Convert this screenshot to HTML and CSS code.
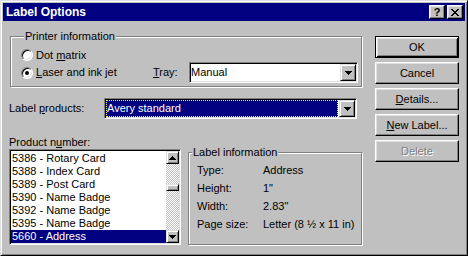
FILE: index.html
```html
<!DOCTYPE html>
<html lang="en">
<head>
  <meta charset="UTF-8">
  <title>Label Options</title>
  <link rel="stylesheet" href="styles.css">
</head>
<body>

  <div class="window">
    <div class="titlebar">
      <span class="title">Label Options</span>
      <div class="title-btns">
        <span class="tbtn help">?</span>
        <span class="tbtn close">
          <svg width="8" height="7" shape-rendering="crispEdges"><path d="M0 0h2v1h-2zM6 0h2v1h-2zM1 1h2v1h-2zM5 1h2v1h-2zM2 2h4v1h-4zM3 3h2v1h-2zM2 4h4v1h-4zM1 5h2v1h-2zM5 5h2v1h-2zM0 6h2v1h-2zM6 6h2v1h-2z"/></svg>
        </span>
      </div>
    </div>

    <div class="content">
      <div class="main">

        <div class="group printer">
          <div class="legend">Printer information</div>
          <div class="opt-row first">
            <span class="radio"></span><span>Dot <u>m</u>atrix</span>
          </div>
          <div class="opt-row second">
            <div class="radio-item"><span class="radio checked"></span><span><u>L</u>aser and ink jet</span></div>
            <span class="tray-label"><u>T</u>ray:</span>
            <div class="combo tray">
              <span class="combo-text">Manual</span>
              <span class="drop-btn"><svg width="7" height="4" shape-rendering="crispEdges"><path d="M0 0h7v1h-1v1h-1v1h-1v1h-1v-1h-1v-1h-1v-1h-1z"/></svg></span>
            </div>
          </div>
        </div>

        <div class="products-row">
          <span class="products-label">Label <u>p</u>roducts:</span>
          <div class="combo products">
            <span class="combo-text selected">Avery standard</span>
            <span class="drop-btn"><svg width="7" height="4" shape-rendering="crispEdges"><path d="M0 0h7v1h-1v1h-1v1h-1v1h-1v-1h-1v-1h-1v-1h-1z"/></svg></span>
          </div>
        </div>

        <div class="lower">
          <div class="list-col">
            <div class="list-label">Product n<u>u</u>mber:</div>
            <div class="listbox">
              <ul class="items">
                <li>5386 - Rotary Card</li>
                <li>5388 - Index Card</li>
                <li>5389 - Post Card</li>
                <li>5390 - Name Badge</li>
                <li>5392 - Name Badge</li>
                <li>5395 - Name Badge</li>
                <li class="active">5660 - Address</li>
              </ul>
              <div class="scrollbar">
                <span class="sbtn"><svg width="7" height="4" shape-rendering="crispEdges"><path d="M3 0h1v1h1v1h1v1h1v1h-7v-1h1v-1h1v-1h1z"/></svg></span>
                <div class="track"><span class="thumb"></span></div>
                <span class="sbtn"><svg width="7" height="4" shape-rendering="crispEdges"><path d="M0 0h7v1h-1v1h-1v1h-1v1h-1v-1h-1v-1h-1v-1h-1z"/></svg></span>
              </div>
            </div>
          </div>

          <div class="group info">
            <div class="legend">Label information</div>
            <div class="info-grid">
              <span>Type:</span><span>Address</span>
              <span>Height:</span><span>1"</span>
              <span>Width:</span><span>2.83"</span>
              <span>Page size:</span><span>Letter (8 ½ x 11 in)</span>
            </div>
          </div>
        </div>

      </div>

      <div class="buttons">
        <span class="btn default">OK</span>
        <span class="btn">Cancel</span>
        <span class="btn"><span><u>D</u>etails...</span></span>
        <span class="btn"><span><u>N</u>ew Label...</span></span>
        <span class="btn disabled">Delete</span>
      </div>
    </div>
  </div>

</body>
</html>
```

FILE: styles.css
```css
* {
 box-sizing: border-box;
}
body {
 margin: 0;
 background-color: #c0c0c0;
 font-family: "Liberation Sans", Arial, sans-serif;
 font-size: 11px;
 line-height: 13px;
 color: #000;
}
.window {
 width: 468px;
 height: 256px;
 padding: 2px;
 border: 1px solid;
 border-color: #dfdfdf #000 #000 #dfdfdf;
 box-shadow: inset 1px 1px #fff, inset -1px -1px #808080;
 background-color: #c0c0c0;
}
.titlebar {
 height: 18px;
 background-color: #000080;
 display: flex;
 align-items: center;
 justify-content: space-between;
 padding: 0 2px 0 3px;
}
.title {
 color: #fff;
 font-weight: bold;
 font-size: 12px;
}
.title-btns {
 display: flex;
 gap: 2px;
}
.tbtn {
 width: 16px;
 height: 14px;
 display: flex;
 align-items: center;
 justify-content: center;
 background-color: #c0c0c0;
 border: 1px solid;
 border-color: #fff #000 #000 #fff;
 box-shadow: inset -1px -1px #808080, inset 1px 1px #dfdfdf;
 font-weight: bold;
 font-size: 11px;
 line-height: 12px;
}
.content {
 display: flex;
 padding: 15px 6px 0 6px;
}
.main {
 width: 354px;
}

/* group boxes */
.group {
 border: 1px solid #808080;
 box-shadow: 1px 1px 0 #fff, inset 1px 1px 0 #fff;
}
.legend {
 width: fit-content;
 margin: -7px 0 0 3px;
 padding: 0 1px;
 background-color: #c0c0c0;
}
.printer {
 margin-left: 1px;
 width: 352px;
 height: 51px;
 padding-left: 10px;
}
.opt-row {
 display: flex;
 align-items: center;
}
.opt-row.first {
 margin-top: 5px;
 height: 14px;
}
.opt-row.second {
 height: 21px;
}
.radio-item {
 width: 132px;
 display: flex;
 align-items: center;
}
.radio {
 width: 12px;
 height: 12px;
 margin-right: 3px;
 border-radius: 50%;
 background-color: #fff;
 border: 1px solid;
 border-color: #808080 #fff #fff #808080;
 box-shadow: inset 1px 1px #000, inset -1px -1px #dfdfdf;
 display: flex;
 align-items: center;
 justify-content: center;
}
.radio.checked::after {
 content: "";
 width: 4px;
 height: 4px;
 border-radius: 50%;
 background-color: #000;
}
.tray-label {
 width: 36px;
}

/* combo boxes */
.combo {
 height: 21px;
 display: flex;
 padding: 1px;
 background-color: #fff;
 border: 1px solid;
 border-color: #808080 #fff #fff #808080;
 box-shadow: inset 1px 1px #000, inset -1px -1px #dfdfdf;
}
.combo.tray {
 width: 169px;
}
.combo-text {
 flex: 1;
 display: flex;
 align-items: center;
}
.combo-text.selected {
 margin-right: 1px;
 background-color: #000080;
 color: #fff;
 border: 1px dotted #ffff00;
}
.drop-btn,
.sbtn {
 width: 16px;
 display: flex;
 align-items: center;
 justify-content: center;
 background-color: #c0c0c0;
 border: 1px solid;
 border-color: #dfdfdf #000 #000 #dfdfdf;
 box-shadow: inset 1px 1px #fff, inset -1px -1px #808080;
}
.products-row {
 margin-top: 11px;
 height: 21px;
 display: flex;
 align-items: center;
}
.products-label {
 width: 95px;
}
.combo.products {
 width: 253px;
}

/* product list */
.lower {
 display: flex;
 margin-top: 17px;
}
.list-col {
 width: 172px;
}
.listbox {
 height: 96px;
 display: flex;
 padding: 1px;
 background-color: #fff;
 border: 1px solid;
 border-color: #808080 #fff #fff #808080;
 box-shadow: inset 1px 1px #000, inset -1px -1px #dfdfdf;
}
.items {
 flex: 1;
 list-style: none;
 margin: 0;
 padding: 1px 0 0 0;
}
.items li {
 height: 13px;
 padding-left: 1px;
}
.items li.active {
 background-color: #000080;
 color: #fff;
}
.scrollbar {
 width: 13px;
 display: flex;
 flex-direction: column;
}
.sbtn {
 width: 13px;
 height: 13px;
}
.track {
 flex: 1;
 background: repeating-conic-gradient(#c0c0c0 0 25%, #fff 0 50%) 0 0 / 2px 2px;
}
.thumb {
 display: block;
 height: 7px;
 margin-top: 20px;
 background-color: #c0c0c0;
 border: 1px solid;
 border-color: #dfdfdf #000 #000 #dfdfdf;
 box-shadow: inset 1px 1px #fff, inset -1px -1px #808080;
}

/* label information */
.info {
 margin: 16px 0 0 7px;
 width: 174px;
 height: 93px;
}
.info-grid {
 display: grid;
 grid-template-columns: 66px auto;
 grid-auto-rows: 18px;
 align-items: center;
 padding: 2px 0 0 8px;
}

/* buttons */
.buttons {
 margin-left: auto;
 width: 84px;
 display: flex;
 flex-direction: column;
 gap: 4px;
}
.btn {
 height: 22px;
 display: flex;
 align-items: center;
 justify-content: center;
 border: 1px solid;
 border-color: #fff #000 #000 #fff;
 box-shadow: inset -1px -1px #808080, inset 1px 1px #dfdfdf;
}
.btn.default {
 border: 1px solid #000;
 box-shadow: inset 1px 1px #fff, inset -1px -1px #000, inset 2px 2px #dfdfdf, inset -2px -2px #808080;
}
.btn.disabled {
 color: #808080;
 text-shadow: 1px 1px 0 #fff;
}
```
